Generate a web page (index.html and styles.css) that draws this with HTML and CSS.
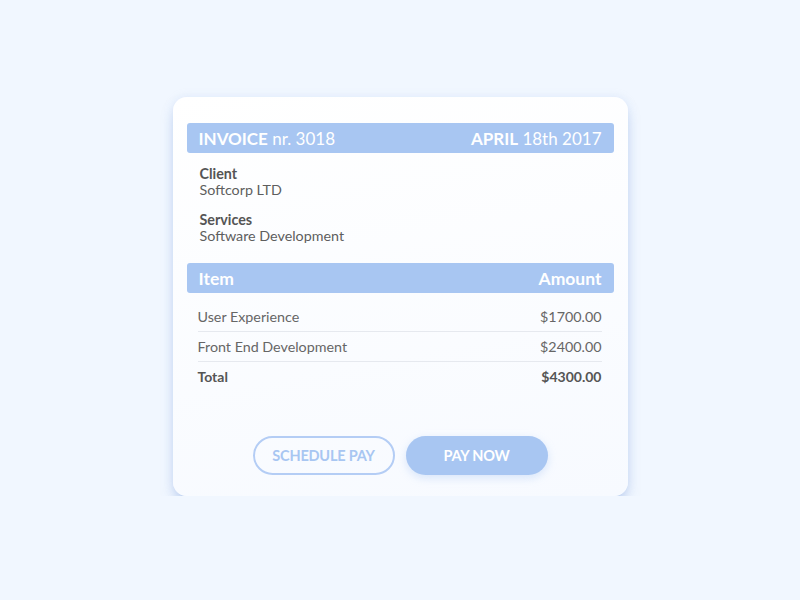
FILE: index.html
```html
<!DOCTYPE html>
<html>
<head>
<meta charset="utf-8">
<link rel="stylesheet" href="styles.css">
</head>
<body>
<div class="page">
  <div class="card">
    <div class="bar">
      <div><b>INVOICE</b> nr. 3018</div>
      <div><b>APRIL</b> 18th 2017</div>
    </div>
    <div class="info">
      <div class="group">
        <div class="label">Client</div>
        <div class="value">Softcorp LTD</div>
      </div>
      <div class="group">
        <div class="label">Services</div>
        <div class="value">Software Development</div>
      </div>
    </div>
    <div class="bar bar-bold">
      <div>Item</div>
      <div>Amount</div>
    </div>
    <div class="rows">
      <div class="row"><span>User Experience</span><span>$1700.00</span></div>
      <div class="row"><span>Front End Development</span><span>$2400.00</span></div>
      <div class="row total"><span>Total</span><span>$4300.00</span></div>
    </div>
    <div class="actions">
      <button class="btn btn-outline">SCHEDULE PAY</button>
      <button class="btn btn-fill">PAY NOW</button>
    </div>
  </div>
</div>
</body>
</html>
```
FILE: styles.css
```css
html, body {
  margin: 0;
  padding: 0;
  background: #f1f7ff;
  font-family: Lato, "Open Sans", sans-serif;
}
.page {
  display: flex;
  justify-content: center;
  padding-top: 97px;
}
.card {
  width: 455px;
  box-sizing: border-box;
  padding: 26px 14px 21px;
  background: linear-gradient(170deg, #ffffff 0%, #f7faff 100%);
  border-radius: 14px;
  box-shadow: 0 9px 14px -3px rgba(125, 160, 222, 0.5), 0 0 8px rgba(180, 205, 240, 0.25);
}
.bar {
  height: 30px;
  background: #a8c6f2;
  border-radius: 3px;
  display: flex;
  justify-content: space-between;
  align-items: center;
  padding: 0 12px;
  color: #fff;
  font-size: 17px;
}
.bar b { font-weight: 700; }
.bar-bold { font-weight: 700; margin-top: 19px; font-size: 17.5px; }
.info {
  padding: 13px 13px 0;
  color: #5e5e5e;
  font-size: 14.3px;
}
.group + .group { margin-top: 14px; }
.label { font-weight: 700; line-height: 16px; color: #555; }
.value { line-height: 16px; }
.rows {
  margin: 9px 12px 0 11px;
  color: #666;
  font-size: 14.3px;
}
.row {
  height: 29px;
  display: flex;
  justify-content: space-between;
  align-items: center;
  border-bottom: 1px solid #e6e9ef;
}
.row.total {
  border-bottom: none;
  font-weight: 700;
  color: #555;
  font-size: 14px;
}
.actions {
  margin-top: 45px;
  display: flex;
  justify-content: center;
  gap: 11px;
}
.btn {
  width: 142px;
  height: 39px;
  border-radius: 20px;
  font-family: Lato, sans-serif;
  font-weight: 700;
  font-size: 14.5px;
  letter-spacing: -0.2px;
  box-sizing: border-box;
}
.btn-outline {
  background: transparent;
  border: 2px solid #b4cdf5;
  color: #a8c6f2;
}
.btn-fill {
  background: #a8c6f2;
  border: none;
  color: #fff;
  box-shadow: 0 3px 8px rgba(168, 198, 242, 0.4);
}
```
